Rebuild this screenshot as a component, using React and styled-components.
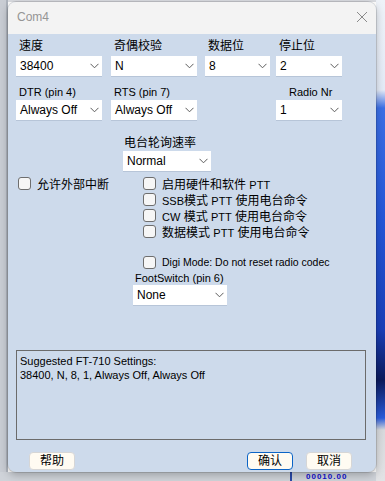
import React from "react";
import styled, { createGlobalStyle } from "styled-components";

const GlobalStyle = createGlobalStyle`
  html, body {
    margin: 0;
    width: 385px;
    height: 481px;
    overflow: hidden;
  }
  body {
    font-family: "Liberation Sans", "Noto Sans CJK SC", sans-serif;
  }
`;

const CJK = `"Liberation Sans", "Noto Sans CJK SC", sans-serif`;

const Desktop = styled.div`
  display: grid;
  grid-template-columns: 8px 368px 9px;
  grid-template-rows: 2px 470px 9px;
  grid-template-areas:
    "l t r"
    "l w r"
    "b b r";
  width: 385px;
  height: 481px;
`;

const LeftEdge = styled.div`
  grid-area: l;
  background: linear-gradient(90deg, #c9cdd4 0 6px, #aeb4bd 6px);
`;

const TopEdge = styled.div`
  grid-area: t;
  background: #d9dbe0;
`;

const RightEdge = styled.div`
  grid-area: r;
  background: linear-gradient(
    180deg,
    #eef2f8 0,
    #e4ebf7 90px,
    #3b6fe6 108px,
    #2456d8 220px,
    #1a3fb8 330px,
    #0b1a5c 380px,
    #2b5cdc 418px,
    #d8dadd 430px,
    #e2e3e5 481px
  );
`;

const BottomEdge = styled.div`
  grid-area: b;
  display: flex;
  align-items: center;
  overflow: hidden;
  background: #cfd3d9;
  padding-left: 290px;
`;

const TaskBar = styled.div`
  width: 2px;
  height: 9px;
  background: #2a4aa8;
`;

const TaskText = styled.span`
  margin-left: 14px;
  font-size: 8px;
  font-weight: bold;
  line-height: 9px;
  color: #1010d0;
  letter-spacing: 1px;
`;

const Window = styled.div`
  grid-area: w;
  display: flex;
  flex-direction: column;
  border-radius: 8px;
  overflow: hidden;
  background: #cddaeb;
  box-shadow: 0 0 0 1px rgba(0, 0, 0, 0.12), 0 3px 8px rgba(0, 0, 0, 0.25);
`;

const TitleBar = styled.div`
  height: 30px;
  display: flex;
  align-items: center;
  justify-content: space-between;
  padding: 0 8px 2px 9px;
  background: #f3f3f3;
`;

const Title = styled.span`
  font-size: 12px;
  color: #959595;
`;

const Body = styled.div`
  flex: 1;
  display: flex;
  flex-direction: column;
  padding: 0 10px 0 8px;
`;

const Row = styled.div`
  display: grid;
  grid-template-columns: ${({ $cols }) => $cols};
  margin-top: ${({ $top }) => $top}px;
`;

const Field = styled.div`
  display: flex;
  flex-direction: column;
  padding-left: ${({ $indent }) => $indent || 0}px;
`;

const BigLabel = styled.div`
  height: 16px;
  line-height: 16px;
  font-family: ${CJK};
  font-size: 12px;
  color: #000;
  padding-left: ${({ $pad }) => $pad ?? 3}px;
  margin-bottom: ${({ $gap }) => $gap ?? 2}px;
`;

const SmallLabel = styled.div`
  height: 14px;
  line-height: 14px;
  font-size: 11px;
  color: #000;
  padding-left: ${({ $pad }) => $pad ?? 3}px;
  margin-bottom: ${({ $gap }) => $gap ?? 1}px;
`;

const SelectBox = styled.div`
  width: ${({ $w }) => $w}px;
  height: 20px;
  box-sizing: border-box;
  display: flex;
  align-items: center;
  justify-content: space-between;
  padding: 0 3px 0 4px;
  background: #fff;
  box-shadow: 0 1px 0 rgba(120, 135, 160, 0.25);
  font-size: 12px;
  color: #000;
`;

const Chevron = () => (
  <svg width="9" height="6" viewBox="0 0 9 6">
    <path d="M0.5 0.8 L4.5 4.8 L8.5 0.8" fill="none" stroke="#5c5c5c" strokeWidth="1" />
  </svg>
);

const Select = ({ w, value }) => (
  <SelectBox $w={w}>
    <span>{value}</span>
    <Chevron />
  </SelectBox>
);

const CheckArea = styled.div`
  display: grid;
  grid-template-columns: 127px 1fr;
  margin-top: 4px;
`;

const CheckColumn = styled.div`
  display: flex;
  flex-direction: column;
  padding-left: ${({ $pad }) => $pad || 0}px;
`;

const CheckRow = styled.label`
  display: flex;
  align-items: center;
  gap: 6px;
  height: 16px;
  margin-top: ${({ $top }) => $top || 0}px;
  font-family: ${CJK};
  font-size: 12px;
  color: #000;
  white-space: nowrap;
`;

const Box = styled.span`
  width: 13px;
  height: 13px;
  box-sizing: border-box;
  border: 1px solid #6e6e6e;
  border-radius: 3px;
  background: #f6f6f6;
  flex: none;
`;

const Latin = styled.span`
  font-size: ${({ $size }) => $size || 11}px;
`;

const Info = styled.div`
  margin-top: 45px;
  width: 350px;
  height: 90px;
  box-sizing: border-box;
  border: 1px solid #6b6b6b;
  padding: 3px 3px;
  font-size: 11px;
  line-height: 14px;
  color: #000;
`;

const Buttons = styled.div`
  display: flex;
  gap: 13px;
  margin-top: 12px;
  padding: 0 14px 0 13px;
`;

const Button = styled.button`
  width: 46px;
  height: 18px;
  box-sizing: border-box;
  padding: 0;
  margin-left: ${({ $push }) => ($push ? "auto" : "0")};
  border: 1px solid ${({ $primary }) => ($primary ? "#0b64c6" : "#d6d6d6")};
  border-radius: 4px;
  background: #fffbf2;
  font-family: ${CJK};
  font-size: 12px;
  line-height: 16px;
  color: #000;
`;

const App = () => {
  return (
    <>
      <GlobalStyle />
      <Desktop>
        <LeftEdge />
        <TopEdge />
        <RightEdge />
        <BottomEdge>
          <TaskBar />
          <TaskText>00010.00</TaskText>
        </BottomEdge>
        <Window>
          <TitleBar>
            <Title>Com4</Title>
            <svg width="12" height="12" viewBox="0 0 12 12">
              <path d="M1 1 L11 11 M11 1 L1 11" stroke="#8a8a8a" strokeWidth="1" />
            </svg>
          </TitleBar>
          <Body>
            <Row $cols="95px 94px 71px 66px" $top={4}>
              <Field>
                <BigLabel>速度</BigLabel>
                <Select w={86} value="38400" />
              </Field>
              <Field>
                <BigLabel>奇偶校验</BigLabel>
                <Select w={86} value="N" />
              </Field>
              <Field>
                <BigLabel>数据位</BigLabel>
                <Select w={65} value="8" />
              </Field>
              <Field>
                <BigLabel>停止位</BigLabel>
                <Select w={66} value="2" />
              </Field>
            </Row>

            <Row $cols="95px 165px 66px" $top={9}>
              <Field>
                <SmallLabel>DTR (pin 4)</SmallLabel>
                <Select w={86} value="Always Off" />
              </Field>
              <Field>
                <SmallLabel>RTS (pin 7)</SmallLabel>
                <Select w={86} value="Always Off" />
              </Field>
              <Field>
                <SmallLabel $pad={13}>Radio Nr</SmallLabel>
                <Select w={66} value="1" />
              </Field>
            </Row>

            <Row $cols="1fr" $top={15}>
              <Field $indent={107}>
                <BigLabel $pad={1} $gap={0}>电台轮询速率</BigLabel>
                <Select w={88} value="Normal" />
              </Field>
            </Row>

            <CheckArea>
              <CheckColumn $pad={2}>
                <CheckRow>
                  <Box />
                  允许外部中断
                </CheckRow>
              </CheckColumn>
              <CheckColumn>
                <CheckRow>
                  <Box />
                  <span>
                    启用硬件和软件 <Latin>PTT</Latin>
                  </span>
                </CheckRow>
                <CheckRow>
                  <Box />
                  <span>
                    <Latin>SSB</Latin>模式 <Latin>PTT</Latin> 使用电台命令
                  </span>
                </CheckRow>
                <CheckRow>
                  <Box />
                  <span>
                    <Latin>CW</Latin> 模式 <Latin>PTT</Latin> 使用电台命令
                  </span>
                </CheckRow>
                <CheckRow>
                  <Box />
                  <span>
                    数据模式 <Latin>PTT</Latin> 使用电台命令
                  </span>
                </CheckRow>
                <CheckRow $top={15}>
                  <Box />
                  <Latin $size={10.5}>Digi Mode: Do not reset radio codec</Latin>
                </CheckRow>
              </CheckColumn>
            </CheckArea>

            <Row $cols="1fr" $top={1}>
              <Field $indent={117}>
                <SmallLabel $pad={2} $gap={0}>
                  FootSwitch (pin 6)
                </SmallLabel>
                <Select w={94} value="None" />
              </Field>
            </Row>

            <Info>
              Suggested FT-710 Settings:
              <br />
              38400, N, 8, 1, Always Off, Always Off
            </Info>

            <Buttons>
              <Button>帮助</Button>
              <Button $primary $push>
                确认
              </Button>
              <Button>取消</Button>
            </Buttons>
          </Body>
        </Window>
      </Desktop>
    </>
  );
};

export default App;
